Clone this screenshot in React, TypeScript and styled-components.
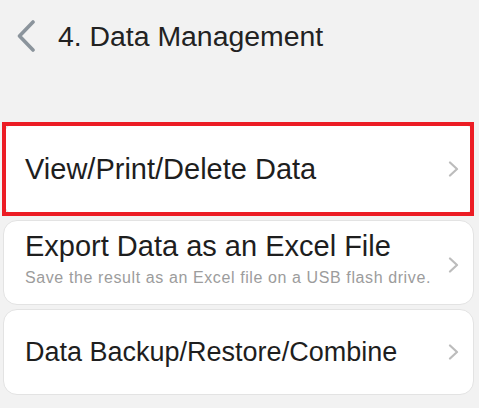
import React, { FC } from 'react';
import styled, { createGlobalStyle } from 'styled-components';

const GlobalStyle = createGlobalStyle`
  html, body {
    margin: 0;
    padding: 0;
    background: #f2f2f2;
    font-family: "Liberation Sans", Arial, sans-serif;
  }
`;

const Page = styled.div`
  width: 479px;
  height: 408px;
  background: #f2f2f2;
  overflow: hidden;
`;

const Header = styled.header`
  height: 72px;
  display: flex;
  align-items: center;
  padding-left: 16px;

  & h1 {
    margin: 0 0 0 22px;
    font-size: 28.4px;
    font-weight: normal;
    color: #222;
    line-height: 32px;
  }
`;

const List = styled.div`
  margin-top: 50px;
  padding: 0 5px 0 3px;
  display: flex;
  flex-direction: column;
  gap: 4px;
`;

const Card = styled.div<{ $height: number; $top?: boolean }>`
  position: relative;
  height: ${(p) => p.$height}px;
  box-sizing: border-box;
  background: #fff;
  border: 1px solid #e3e3e3;
  border-radius: 14px;
  display: flex;
  align-items: ${(p) => (p.$top ? 'flex-start' : 'center')};
  padding: ${(p) => (p.$top ? '9px' : '0')} 14px 0 21px;
`;

// 빨간 강조 테두리 (스크린샷 위의 표시)
const Highlight = styled.div`
  position: absolute;
  top: -1px;
  left: -2px;
  right: -1px;
  bottom: -1px;
  border: 4px solid #ec1c24;
  pointer-events: none;
`;

const Texts = styled.div`
  flex: 1;
  display: flex;
  flex-direction: column;
`;

const Title = styled.div<{ $size?: number }>`
  font-size: ${(p) => p.$size || 29}px;
  line-height: 32px;
  color: #1e1e1e;
`;

const Sub = styled.div`
  margin-top: 6px;
  font-size: 16px;
  line-height: 20px;
  letter-spacing: 0.6px;
  color: #9c9c9c;
`;

const Arrow = styled.svg<{ $shift?: number }>`
  flex: none;
  align-self: center;
  margin-top: ${(p) => p.$shift || 0}px;
`;

const BackIcon = () => (
  <svg width="20" height="32" viewBox="0 0 20 32">
    <path d="M17 2 L3.5 16 L17 30" fill="none" stroke="#8b949c" strokeWidth="3.6" strokeLinecap="round" strokeLinejoin="round" />
  </svg>
);

const Chevron: FC<{ shift?: number }> = ({ shift }) => (
  <Arrow $shift={shift} width="11" height="16" viewBox="0 0 11 16">
    <path d="M2 1.5 L9 8 L2 14.5" fill="none" stroke="#bcbcbc" strokeWidth="2.2" strokeLinecap="round" strokeLinejoin="round" />
  </Arrow>
);

const App: FC = () => (
  <>
    <GlobalStyle />
    <Page>
      <Header>
        <BackIcon />
        <h1>4. Data Management</h1>
      </Header>
      <List>
        <Card $height={94}>
          <Texts>
            <Title>View/Print/Delete Data</Title>
          </Texts>
          <Chevron />
          <Highlight />
        </Card>
        <Card $height={85} $top>
          <Texts>
            <Title>Export Data as an Excel File</Title>
            <Sub>Save the result as an Excel file on a USB flash drive.</Sub>
          </Texts>
          <Chevron shift={-5} />
        </Card>
        <Card $height={86}>
          <Texts>
            <Title $size={27}>Data Backup/Restore/Combine</Title>
          </Texts>
          <Chevron />
        </Card>
      </List>
    </Page>
  </>
);

export default App;
